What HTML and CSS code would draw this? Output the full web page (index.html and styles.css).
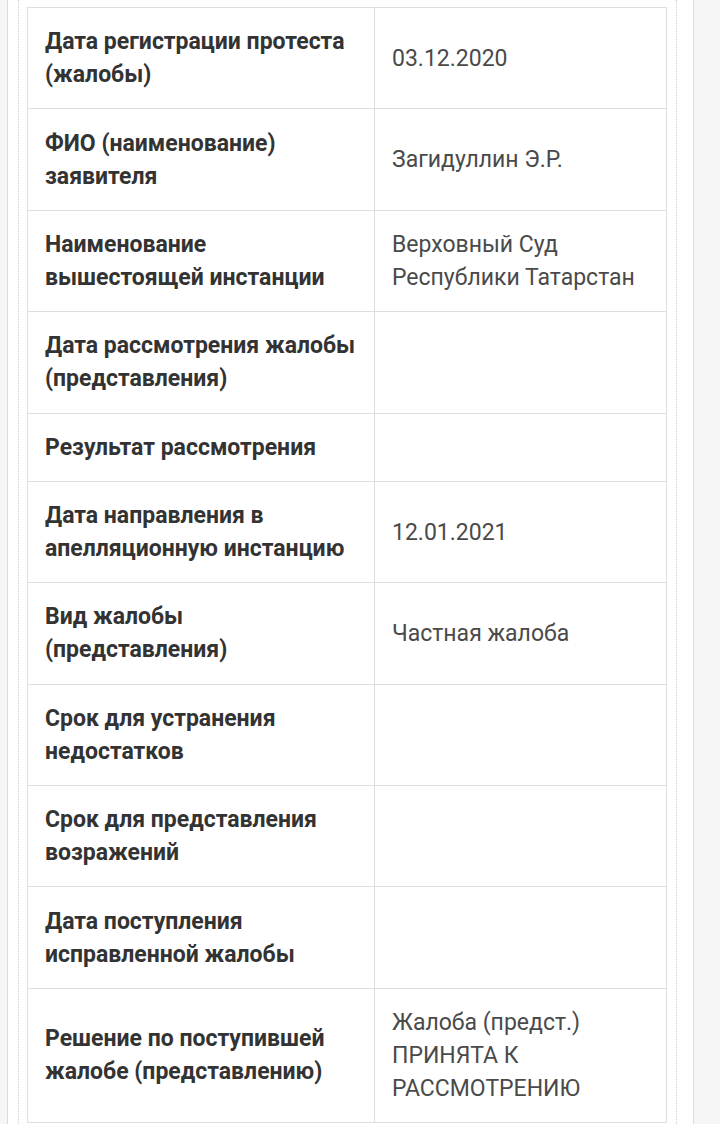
FILE: index.html
```html
<!DOCTYPE html>
<html lang="ru">
<head>
<meta charset="utf-8">
<link rel="stylesheet" href="styles.css">
</head>
<body>
<div class="page">
  <div class="inner">
    <table class="info">
      <tr><th>Дата регистрации протеста (жалобы)</th><td>03.12.2020</td></tr>
      <tr><th>ФИО (наименование) заявителя</th><td>Загидуллин Э.Р.</td></tr>
      <tr><th>Наименование вышестоящей инстанции</th><td>Верховный Суд Республики Татарстан</td></tr>
      <tr><th>Дата рассмотрения жалобы (представления)</th><td></td></tr>
      <tr><th>Результат рассмотрения</th><td></td></tr>
      <tr><th>Дата направления в апелляционную инстанцию</th><td>12.01.2021</td></tr>
      <tr><th>Вид жалобы (представления)</th><td>Частная жалоба</td></tr>
      <tr><th>Срок для устранения недостатков</th><td></td></tr>
      <tr><th>Срок для представления возражений</th><td></td></tr>
      <tr><th>Дата поступления исправленной жалобы</th><td></td></tr>
      <tr><th>Решение по поступившей жалобе (представлению)</th><td>Жалоба (предст.) ПРИНЯТА К РАССМОТРЕНИЮ</td></tr>
    </table>
  </div>
</div>
</body>
</html>
```
FILE: styles.css
```css
html, body {
  margin: 0;
  padding: 0;
}
body {
  background: #f6f6f6;
  font-family: Roboto, "Liberation Sans", sans-serif;
  height: 1124px;
  overflow: hidden;
}
.page {
  margin-left: 7px;
  width: 685px;
  min-height: 1124px;
  background: #fff;
  border-left: 1px solid #dcdcdc;
  border-right: 1px solid #dcdcdc;
}
.inner {
  margin-left: 10px;
  width: 659px;
  min-height: 1124px;
  border-left: 1px dotted #cfcfcf;
  border-right: 1px dotted #cfcfcf;
  padding: 7px 0 0 8px;
  box-sizing: border-box;
}
.info {
  border-collapse: collapse;
  width: 640px;
  font-size: 23px;
  line-height: 33px;
}
.info th, .info td {
  border: 1px solid #dedede;
  padding: 17.2px 17px;
  vertical-align: middle;
  text-align: left;
}
.info th {
  width: 312px;
  font-weight: 700;
  color: #333;
}
.info td {
  font-weight: 400;
  color: #4a4a4a;
}
```
